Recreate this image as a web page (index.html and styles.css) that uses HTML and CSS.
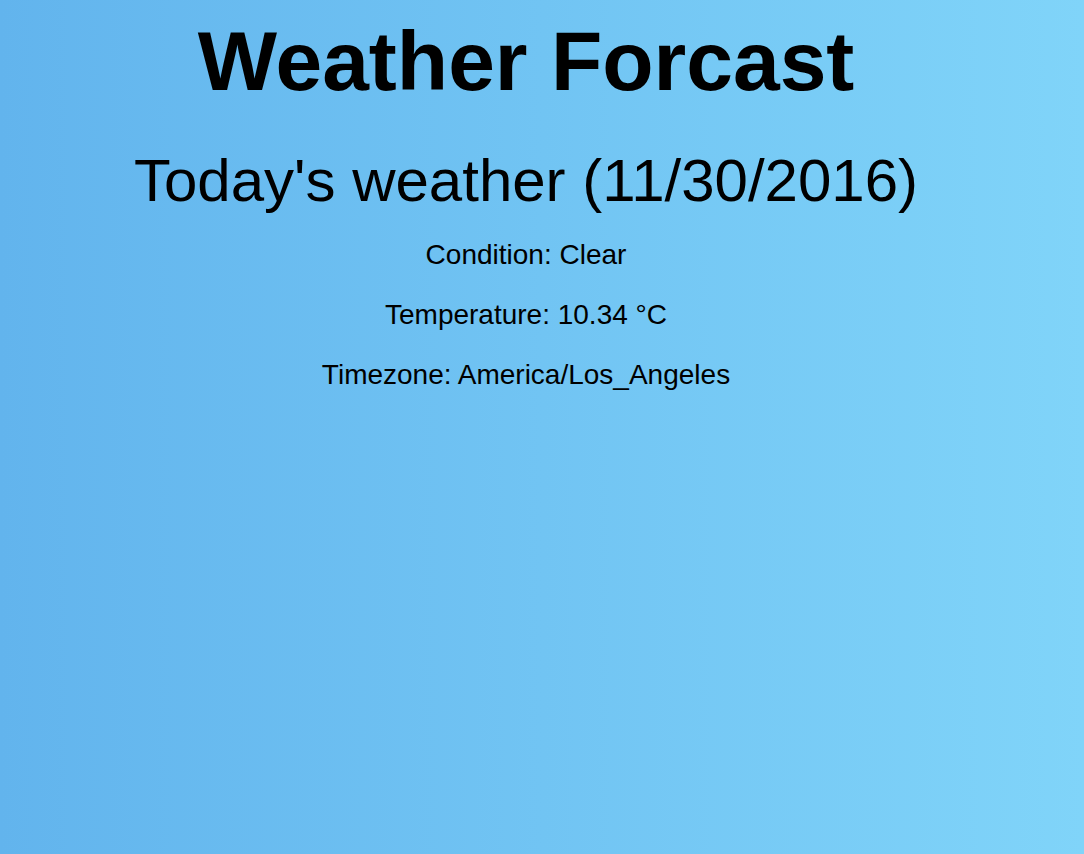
FILE: index.html
```html
<!DOCTYPE html>
<html lang="en">
<head>
<meta charset="utf-8">
<title>Weather Forcast</title>
<link rel="stylesheet" href="styles.css">
</head>
<body>
<main class="page">
  <h1 class="title">Weather Forcast</h1>
  <h2 class="subtitle">Today's weather (11/30/2016)</h2>
  <section class="details">
    <p class="detail">Condition: Clear</p>
    <p class="detail">Temperature: 10.34 °C</p>
    <p class="detail">Timezone: America/Los_Angeles</p>
  </section>
</main>
</body>
</html>
```
FILE: styles.css
```css
html, body {
  margin: 0;
  padding: 0;
  height: 100%;
}
body {
  background: linear-gradient(to right, #62b4ed, #80d4f9);
  color: #000;
  font-family: "Liberation Sans", Arial, Helvetica, sans-serif;
}
.page {
  padding: 13px 40px 0 8px;
  text-align: center;
}
.title {
  margin: 0;
  font-size: 84px;
  line-height: 96px;
  font-weight: bold;
}
.subtitle {
  margin: 37px 0 0;
  font-size: 60px;
  line-height: 70px;
  font-weight: normal;
}
.details {
  margin-top: 24px;
  display: flex;
  flex-direction: column;
  gap: 30px;
}
.detail {
  margin: 0;
  font-size: 28px;
  line-height: 30px;
}
```
